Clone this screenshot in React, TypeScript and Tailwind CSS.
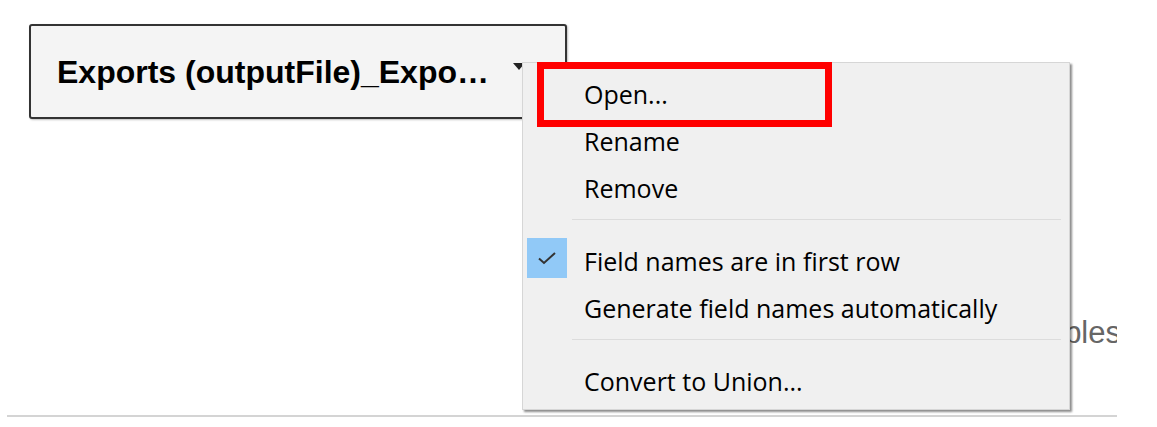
import React from "react";

const items1 = ["Open...", "Rename", "Remove"];

function Row({ children, checked = false }: { children: React.ReactNode; checked?: boolean }) {
  return (
    <div className="relative h-[47px] flex items-center pl-[61px] text-[25px] leading-[47px] text-[#000] whitespace-nowrap">
      {checked && (
        <div className="absolute left-[4px] top-0 w-[40px] h-[40px] bg-[#91c9f7] flex items-center justify-center">
          <svg width="20" height="14" viewBox="0 0 20 14" fill="none">
            <path d="M2 7.5 L7 12 L18 2" stroke="#333" strokeWidth="2" />
          </svg>
        </div>
      )}
      {children}
    </div>
  );
}

function Separator() {
  return (
    <div className="pt-[7px] pb-[18px]">
      <div className="ml-[49px] mr-[8px] h-px bg-[#dcdcdc]" />
    </div>
  );
}

export default function App() {
  return (
    <div className="relative w-[1157px] h-[427px] bg-white overflow-hidden">
      <div className="w-[1117px] h-[427px] overflow-hidden flex flex-col">
        <div className="mt-[24px] ml-[29px] w-[538px] h-[95px] border-2 border-[#333] rounded-[3px] bg-[#f4f4f4] flex items-center pl-[26px] pr-[40px] shadow-[1px_1px_2px_rgba(0,0,0,0.25)]">
          <span className="font-['Liberation_Sans',Arial,sans-serif] font-bold text-[32px] text-black whitespace-nowrap flex-1">
            Exports (outputFile)_Expo…
          </span>
          <svg width="12" height="7" viewBox="0 0 12 7" className="self-start mt-[37px]">
            <path d="M0 0 L12 0 L6 7 Z" fill="#222" />
          </svg>
        </div>
        <div className="mt-[194px] flex justify-end -mr-[4px]">
          <span className="font-['Liberation_Sans',Arial,sans-serif] text-[31px] leading-[40px] text-[#666] whitespace-nowrap">
            Tables
          </span>
        </div>
        <div className="mt-auto mb-[10px] ml-[7px] h-[2px] bg-[#d4d4d4]" />
      </div>

      <div className="absolute left-[522px] top-[62px] w-[548px] bg-[#f0f0f0] border border-[#d6d6d6] shadow-[2px_2px_2px_rgba(0,0,0,0.45)] pt-[8px] pb-[4px] font-['Open_Sans','Noto_Sans',sans-serif]">
        {items1.map((t) => (
          <Row key={t}>{t}</Row>
        ))}
        <Separator />
        <Row checked>Field names are in first row</Row>
        <Row>Generate field names automatically</Row>
        <Separator />
        <Row>Convert to Union...</Row>
      </div>

      <div className="absolute left-[537px] top-[62px] w-[295px] h-[65px] border-[7px] border-[#ff0000] pointer-events-none" />
    </div>
  );
}
